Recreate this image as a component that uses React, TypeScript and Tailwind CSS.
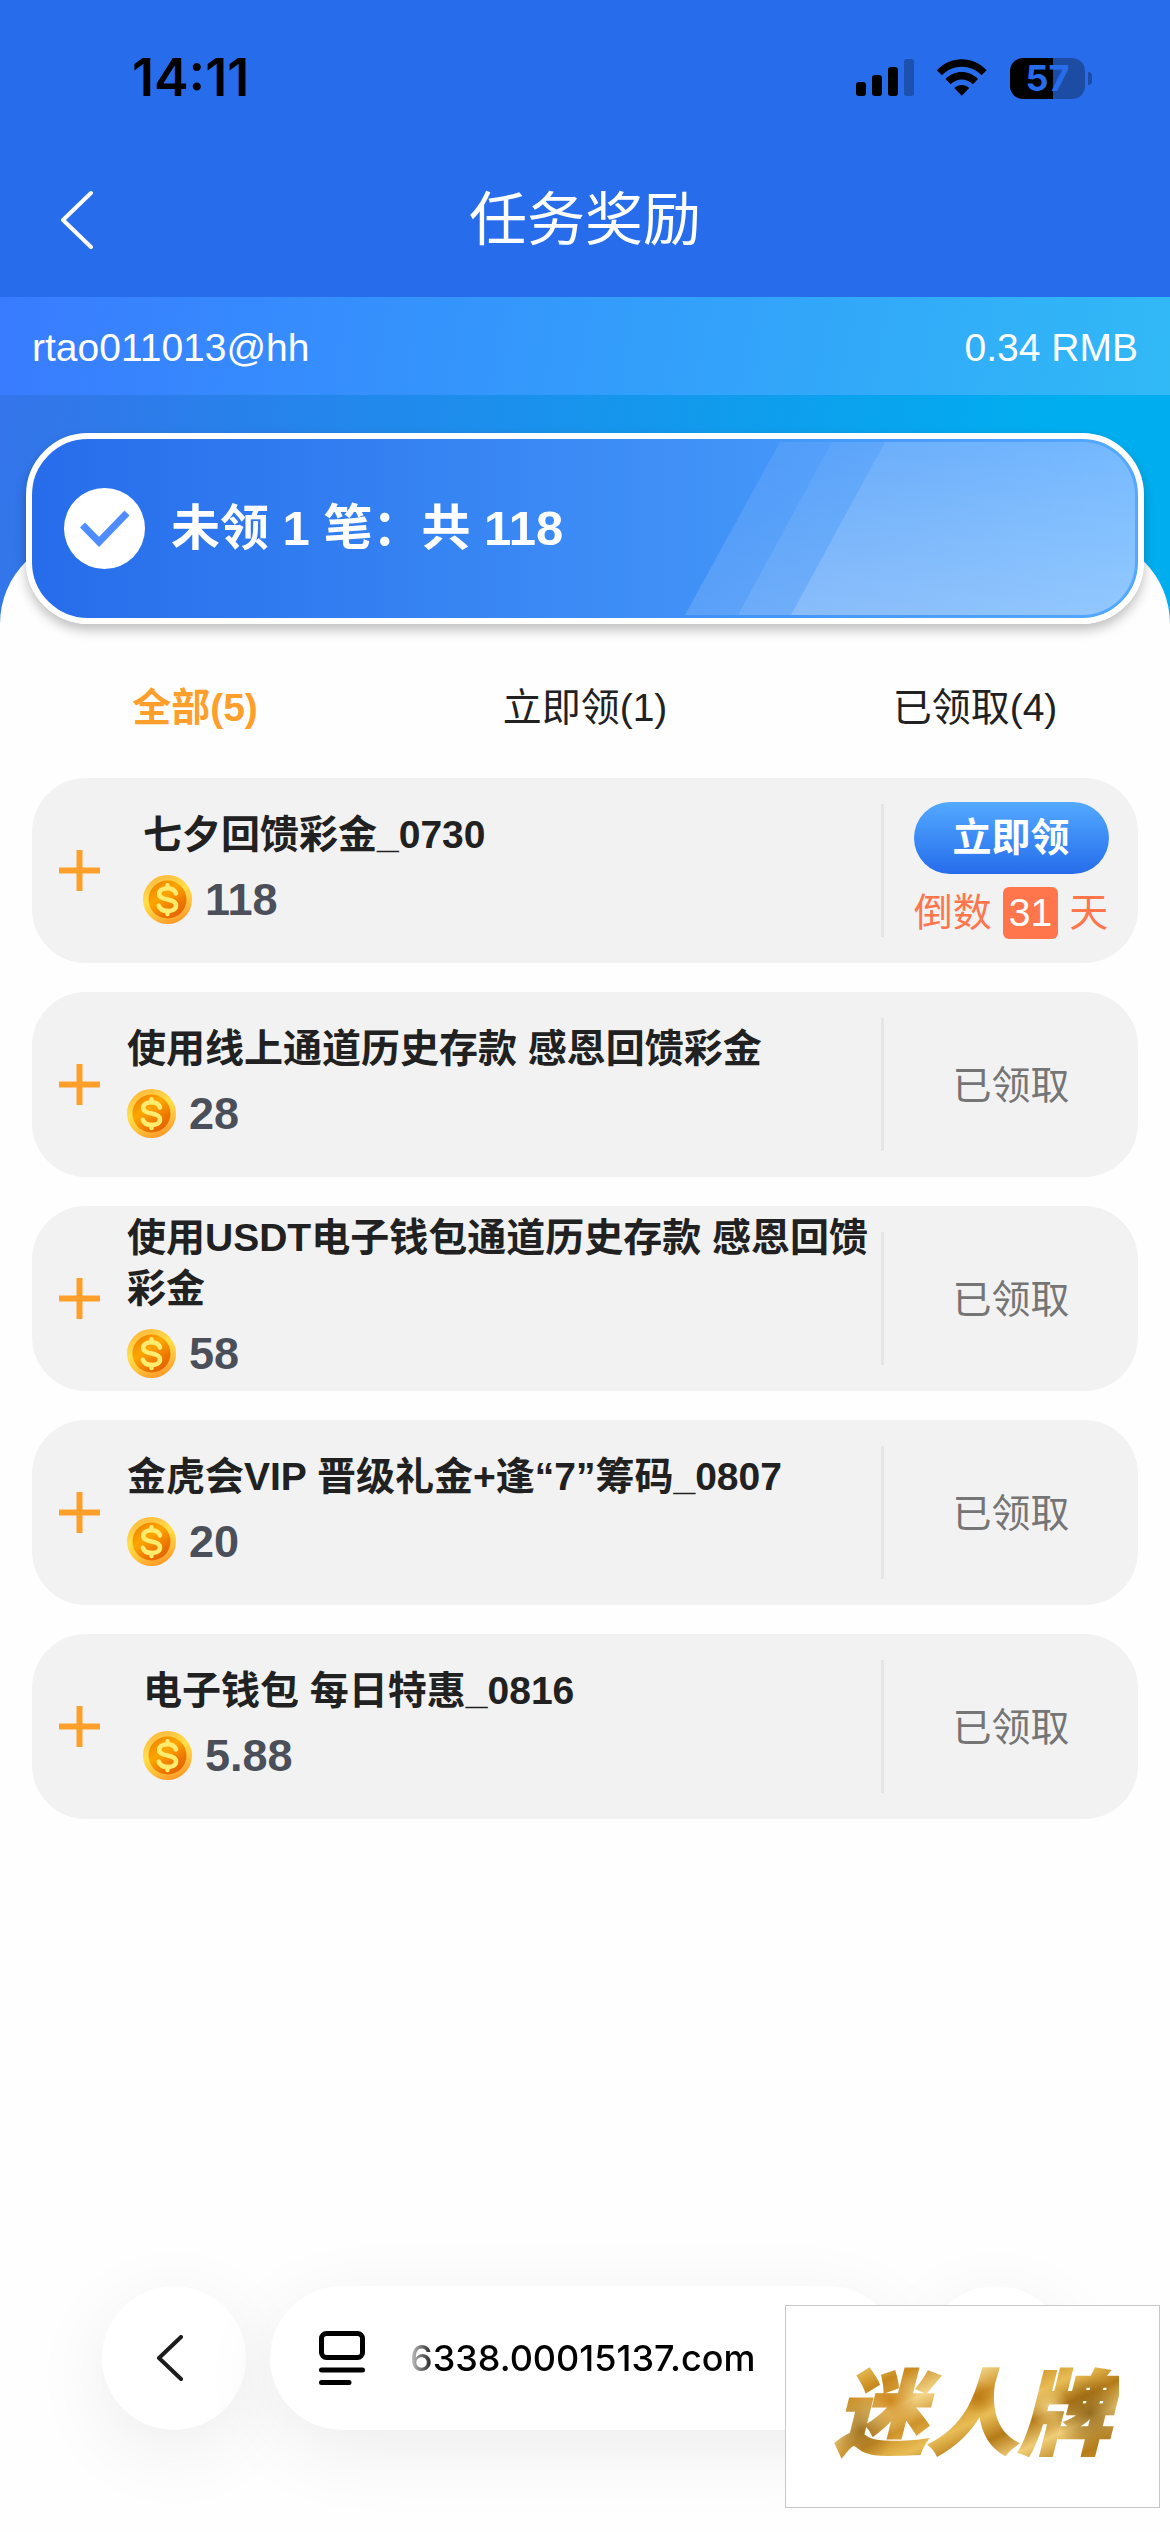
import React from "react";

type Reward = {
  title: string;
  amount: string;
  claimed: boolean;
  indented?: boolean;
};

const rewards: Reward[] = [
  { title: "七夕回馈彩金_0730", amount: "118", claimed: false, indented: true },
  { title: "使用线上通道历史存款 感恩回馈彩金", amount: "28", claimed: true },
  { title: "使用USDT电子钱包通道历史存款 感恩回馈彩金", amount: "58", claimed: true },
  { title: "金虎会VIP 晋级礼金+逢“7”筹码_0807", amount: "20", claimed: true },
  { title: "电子钱包 每日特惠_0816", amount: "5.88", claimed: true, indented: true },
];

const tabs = [
  { label: "全部(5)", active: true },
  { label: "立即领(1)", active: false },
  { label: "已领取(4)", active: false },
];

function Signal() {
  return (
    <svg width="58" height="38" viewBox="0 0 58 38" aria-hidden="true">
      <rect x="0" y="23" width="10" height="14" rx="3" />
      <rect x="16" y="16" width="10" height="21" rx="3" />
      <rect x="32" y="8" width="10" height="29" rx="3" />
      <rect x="48" y="0" width="10" height="37" rx="3" fillOpacity="0.25" />
    </svg>
  );
}

function Wifi() {
  return (
    <svg width="52" height="38" viewBox="0 0 52 38" aria-hidden="true">
      <path d="M0.8 11.2 C14.5 -3.4 37 -3.4 50.7 11.2 L45.6 16.3 C34.5 5 17 5 5.9 16.3 Z" />
      <path d="M9.5 20 C18.5 10.8 33 10.8 42 20 L36.9 25.2 C30.5 18.8 21 18.8 14.6 25.2 Z" />
      <path d="M18.3 28.9 C22.5 25 29 25 33.2 28.9 L25.75 36.8 Z" />
    </svg>
  );
}

function Battery() {
  return (
    <div className="flex items-center gap-[3px]" role="img" aria-label="57%">
      <div className="flex h-[41px] w-[75px] items-center justify-center rounded-[13px] bg-[linear-gradient(90deg,#000_57%,#1d4ca5_57%)] font-[Inter] text-[36px] leading-none font-bold text-[#276ceb]">
        57
      </div>
      <div className="h-[13px] w-1 rounded-r-full bg-[#1d4ca5]" />
    </div>
  );
}

function Coin() {
  return (
    <svg width="49" height="49" viewBox="0 0 49 49" aria-hidden="true">
      <defs>
        <linearGradient id="coinRim" x1="0.3" y1="0" x2="0.7" y2="1">
          <stop offset="0" stopColor="#ffb93c" />
          <stop offset="0.4" stopColor="#ffe04a" />
          <stop offset="0.7" stopColor="#ffc23a" />
          <stop offset="1" stopColor="#ff9426" />
        </linearGradient>
        <linearGradient id="coinFace" x1="0.1" y1="0" x2="0.8" y2="1">
          <stop offset="0" stopColor="#ec7f00" />
          <stop offset="0.4" stopColor="#fda600" />
          <stop offset="0.75" stopColor="#ec7600" />
          <stop offset="1" stopColor="#e06000" />
        </linearGradient>
      </defs>
      <circle cx="24.5" cy="24.5" r="24.5" fill="url(#coinRim)" />
      <circle cx="24.5" cy="24.5" r="19" fill="url(#coinFace)" />
      <g fill="none" stroke="#ffec6e" strokeLinecap="round">
        <path
          strokeWidth="4.6"
          d="M33 18.4 C31.8 15.2 28.8 13.2 24.8 13.2 C20 13.2 16.2 15.4 16.2 18.9 C16.2 22.5 20.2 23.6 24.7 24.5 C29.6 25.5 33 26.9 33 30.4 C33 34 29.4 36 24.8 36 C20.2 36 16.8 34 15.8 30.8"
        />
        <path strokeWidth="4.4" d="M24.5 10.3 V13 M24.5 36 V39" />
      </g>
    </svg>
  );
}

function RewardCard({ reward }: { reward: Reward }) {
  return (
    <li className="flex min-h-[185px] items-center rounded-[54px] bg-[#f2f2f2]">
      <button type="button" aria-label="展开" className="ml-[27px] shrink-0">
        <svg width="41" height="41" viewBox="0 0 41 41" stroke="#ff9f2b" strokeWidth="6" aria-hidden="true">
          <path d="M0 20.5 H41 M20.5 0 V41" />
        </svg>
      </button>
      <div className={reward.indented ? "min-w-0 flex-1 pb-2 pl-[43px]" : "min-w-0 flex-1 pb-2 pl-[27px]"}>
        <h2 className="text-[39px] leading-[51px] font-bold text-[#212121]">{reward.title}</h2>
        <div className="mt-[15px] flex items-center gap-[13px]">
          <Coin />
          <span className="text-[45px] leading-[49px] font-bold text-[#4a4f5a]">{reward.amount}</span>
        </div>
      </div>
      <div className="h-[133px] w-[3px] shrink-0 bg-[#e5e5e5]" />
      <div className="flex w-[254px] shrink-0 flex-col items-center text-[39px]">
        {reward.claimed ? (
          <span className="pt-1 text-[#757575]">已领取</span>
        ) : (
          <>
            <button
              type="button"
              className="h-[72px] w-[195px] rounded-full bg-linear-to-b from-[#54a9ff] to-[#276ceb] leading-[70px] font-bold text-white"
            >
              立即领
            </button>
            <p className="mt-[13px] flex items-center gap-[11px] leading-[52px] text-[#ff764d]">
              <span>倒数</span>
              <span className="rounded-md bg-[#ff764d] px-[6px] text-white">31</span>
              <span>天</span>
            </p>
          </>
        )}
      </div>
    </li>
  );
}

function Banner() {
  return (
    <section className="relative mx-[26px] flex h-[191px] items-center overflow-hidden rounded-[62px] border-[6px] border-white bg-linear-to-r from-[#276ceb] to-[#54a9ff] bg-origin-border pl-8 shadow-[0_6px_12px_rgba(0,0,0,0.25)]">
      <div className="absolute inset-y-[3px] right-[3px] w-[450px] overflow-hidden rounded-r-[53px]">
        <svg width="450" height="173" viewBox="0 0 450 173" aria-hidden="true">
          <defs>
            <linearGradient id="shine" x1="0" y1="0" x2="0" y2="1">
              <stop offset="0" stopColor="#fff" stopOpacity="0.5" />
              <stop offset="1" stopColor="#fff" stopOpacity="1" />
            </linearGradient>
          </defs>
          <g fill="url(#shine)">
            <path fillOpacity="0.14" d="M95 0 H450 V173 H0 Z" />
            <path fillOpacity="0.1" d="M147 0 H450 V173 H53 Z" />
            <path fillOpacity="0.18" d="M200 0 H450 V173 H106 Z" />
          </g>
        </svg>
      </div>
      <svg width="81" height="81" viewBox="0 0 81 81" className="relative" aria-hidden="true">
        <circle cx="40.5" cy="40.5" r="40.5" fill="#fff" />
        <path d="M18.5 37 L35 54 L63 25" fill="none" stroke="#4f8cff" strokeWidth="7" />
      </svg>
      <p className="relative ml-[26px] text-[49px] leading-none font-bold text-white">未领 1 笔：共 118</p>
    </section>
  );
}

export default function App() {
  return (
    <div className="relative flex min-h-screen flex-col bg-[#fefefe] font-['Liberation_Sans','Noto_Sans_CJK_SC',sans-serif]">
      <header className="bg-[#276ceb]">
        <div className="flex h-[156px] items-center justify-between pr-[78px] pl-[132px] text-black">
          <time className="font-[Inter] text-[52px] leading-none font-semibold">14:11</time>
          <div className="flex items-center gap-[22px]">
            <Signal />
            <Wifi />
            <Battery />
          </div>
        </div>
        <div className="grid h-[141px] grid-cols-[94px_1fr_94px] items-center pb-[14px]">
          <button type="button" aria-label="返回" className="justify-self-end">
            <svg width="34" height="60" viewBox="0 0 34 60" fill="none" stroke="#fff" strokeWidth="4" strokeLinecap="round" strokeLinejoin="round" aria-hidden="true">
              <path d="M31 3 L3 30 L31 57" />
            </svg>
          </button>
          <h1 className="text-center text-[58px] leading-none text-white">任务奖励</h1>
        </div>
      </header>

      <div className="flex h-[98px] items-center justify-between bg-linear-100 from-[#397bff] to-[#31b9f6] px-8 pt-1 text-[39px] text-white">
        <span>rtao011013@hh</span>
        <span>0.34 RMB</span>
      </div>

      <div className="bg-[linear-gradient(100deg,#3474ea,#00aeef_88%)] pt-[38px]">
        <Banner />
        <div className="-mt-[88px] h-[88px] rounded-t-[90px] bg-[#fefefe]" />
      </div>

      <main className="px-8 pb-12">
        <nav className="-mx-8 grid grid-cols-3 pt-[58px] text-[39px] leading-[52px] text-[#212121]">
          {tabs.map((tab) => (
            <button key={tab.label} type="button" className={tab.active ? "font-bold text-[#ff9f2b]" : ""}>
              {tab.label}
            </button>
          ))}
        </nav>
        <ul className="mt-11 flex flex-col gap-[29px]">
          {rewards.map((reward) => (
            <RewardCard key={reward.title} reward={reward} />
          ))}
        </ul>
      </main>

      <footer className="mt-auto flex gap-6 px-[102px] pb-[102px]">
        <button
          type="button"
          aria-label="后退"
          className="flex size-36 items-center justify-center rounded-full bg-white pr-2 shadow-[0_20px_80px_rgba(0,0,0,0.07)]"
        >
          <svg width="28" height="46" viewBox="0 0 28 46" fill="none" stroke="#1c1c1c" strokeWidth="4" strokeLinecap="round" strokeLinejoin="round" aria-hidden="true">
            <path d="M25 2 L3 23 L25 44" />
          </svg>
        </button>
        <div className="flex h-36 flex-1 items-center rounded-full bg-white pl-12 shadow-[0_20px_80px_rgba(0,0,0,0.07)]">
          <button type="button" aria-label="页面设置">
            <svg width="48" height="56" viewBox="0 0 48 56" fill="none" stroke="#000" strokeWidth="5" strokeLinecap="round" aria-hidden="true">
              <rect x="3.5" y="3.5" width="41" height="24" rx="5" />
              <path d="M3.5 40 H44.5 M3.5 52.5 H31" />
            </svg>
          </button>
          <span className="ml-11 bg-[linear-gradient(90deg,#ccc,#000_26px)] bg-clip-text font-[Inter] text-[36px] font-medium text-transparent">
            6338.00015137.com
          </span>
        </div>
        <button type="button" aria-label="更多" className="size-36 rounded-full bg-white shadow-[0_20px_80px_rgba(0,0,0,0.07)]" />
      </footer>

      <div className="absolute right-[10px] bottom-6 flex h-[203px] w-[375px] items-center justify-center border border-[#c8c8c8] bg-white">
        <span className="bg-[radial-gradient(circle_at_22%_45%,#c97a0ccc_0,transparent_11%),radial-gradient(circle_at_12%_70%,#8f6010cc_0,transparent_12%),radial-gradient(circle_at_52%_42%,#b8740ecc_0,transparent_10%),radial-gradient(circle_at_90%_55%,#835a10cc_0,transparent_13%),radial-gradient(circle_at_76%_50%,#f6dc90cc_0,transparent_9%),linear-gradient(155deg,#b07a1c_0%,#e9c25c_14%,#c98a1e_24%,#f3d68a_36%,#cf932a_46%,#e8bd55_56%,#b57a18_66%,#efcd77_76%,#b67c1a_88%,#d9a33a_100%)] bg-clip-text px-2 font-['Noto_Sans_CJK_SC',sans-serif] text-[92px] leading-[120px] font-black text-transparent italic [-webkit-text-stroke:2px_transparent]">
          迷人牌
        </span>
      </div>
    </div>
  );
}
